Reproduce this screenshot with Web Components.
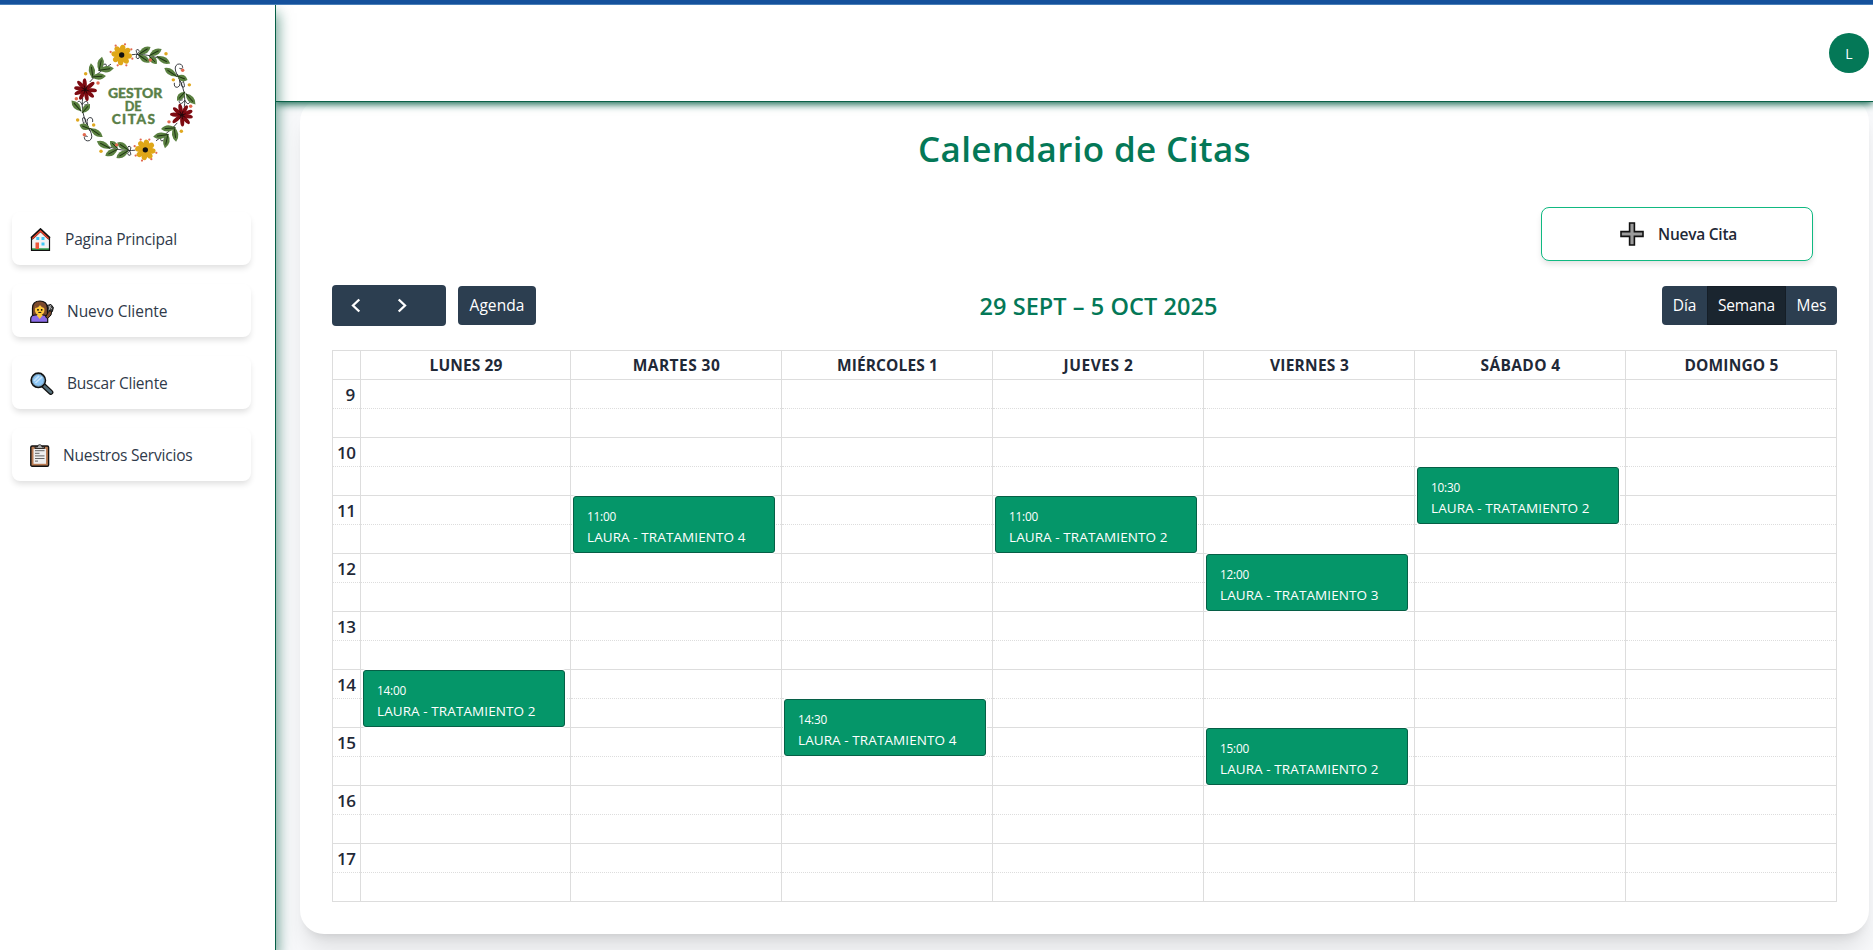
<!DOCTYPE html>
<html lang="es">
<head>
<meta charset="utf-8">
<title>Gestor de Citas</title>
<style>
html,body{margin:0;height:100%;overflow:hidden}
body{font-family:"Open Sans","Noto Sans",sans-serif;color:#1f2937;background:#fff}
</style>
</head>
<body>
<citas-app></citas-app>
<script>
const define = (name, html, init) => customElements.define(name, class extends HTMLElement {
  connectedCallback() {
    if (this.shadowRoot) return;
    const root = this.attachShadow({ mode: 'open' });
    root.innerHTML = typeof html === 'function' ? html(this) : html;
    if (init) init(this, root);
  }
});

/* Text that spreads or tightens its letters to fill a given width. */
define('fit-text', '<style>:host{display:inline-block;white-space:nowrap;line-height:1}span{display:inline-block}</style><span><slot></slot></span>', (el, root) => {
  const span = root.querySelector('span');
  const w = parseFloat(el.getAttribute('w'));
  const n = el.textContent.length;
  const space = (w - span.getBoundingClientRect().width) / n;
  span.style.letterSpacing = space.toFixed(3) + 'px';
});

/* ---------- icons ---------- */
const ICONS = {
  home: [21, 23, `<path d="M2.5 10.5V21h16V10.5L10.5 3z" fill="#f2f2f2"/><path d="M1 21.2h19" stroke="#3aa655" stroke-width="2"/><path d="M5.5 14.5H9V21H5.5z" fill="#f0583a"/><path d="M6.3 9h3v3h-3zm5.200 0h3v3h-3zm0 5.500h3v3h-3z" fill="#40c8f4"/><path d="M1.500 10.500 10.500 2l9 8.500" fill="none" stroke="#111" stroke-width="3.200"/><path d="M2.200 10.700 10.500 3l8.300 7.700" fill="none" stroke="#f0452c" stroke-width="1.500"/><path d="M1.500 10V22.300h18V10" fill="none" stroke="#111" stroke-width="1.200"/>`],
  woman: [24, 23, `<path d="M2.500 18V8C2.500 3 6 1 10 1s7.500 2.500 7.500 7v9z" fill="#7c4a2d" stroke="#111" stroke-width="1.200"/><path d="M.7 22.300V19c0-2.500 2-4 5-4h7c3 0 5 1.500 5 4v3.300z" fill="#8b6be8" stroke="#111" stroke-width="1.200"/><path d="m15.500 17 3.500-6 3-1-1 5-3.300 3.500z" fill="#7c4a2d" stroke="#111"/><path d="m17 5.500 4-1 2.400 3-1 4-3.800-1z" fill="#444" stroke="#111"/><path d="m18.500 6 3.500 3m-1.500-4-1.500 5" stroke="#ccc" stroke-width=".8"/><ellipse cx="9.700" cy="10" rx="4.800" ry="5.200" fill="#ffc83d"/><path d="M5 8c2 0 4-1 5-3 1 2 3 3 5 3-1-3-2.500-4-5-4s-4 1-5 4z" fill="#7c4a2d"/><path d="m6.500 15 3.200 4 3.200-4z" fill="#ffc83d"/><circle cx="8" cy="9.800" r=".9"/><circle cx="11.700" cy="9.800" r=".9"/><path d="M8.300 12.400h3" stroke="#111"/>`],
  search: [24, 23, `<path d="m13 13 7.800 7.300" stroke="#111" stroke-width="5.200" stroke-linecap="round"/><path d="m14 14 6.800 6.300" stroke="#546e7a" stroke-width="2.800" stroke-linecap="round"/><circle cx="8.300" cy="8.300" r="7.100" fill="#8cc5f5" stroke="#111" stroke-width="1.700"/><circle cx="8.300" cy="8.300" r="5.900" fill="none" stroke="#6b8a9c" stroke-width=".8"/><path d="m4 9 5-5m-3.500 7L12 5" stroke="#c7e5fb" stroke-width="1.700"/>`],
  clip: [20, 23, `<rect x=".8" y="2" width="17.800" height="20.200" rx="1.300" fill="#b97b52" stroke="#111" stroke-width="1.400"/><path d="M3.500 4.800h12.500v15H3.500z" fill="#eee"/><path d="M5 4.500V3h2.500C7.500 1.500 8.500.7 9.700.7S12 1.500 12 3h2.500v1.500z" fill="#aaa" stroke="#111" stroke-width=".8"/><path d="M5 6.700h9.500M5 9.300h4.500M5 11.900h9.500M5 14.500h9.500M5 17.100h3" stroke="#555" stroke-width=".9"/>`],
  plus: [24, 24, `<path d="M9.600 1h4.800v8.600H23v4.800h-8.600V23H9.600v-8.600H1V9.600h8.600z" fill="#9b9b9b" stroke="#111" stroke-width="1.600"/>`],
  left: [10, 15, `<path d="M8.300 1.500 2 7.500l6.300 6" fill="none" stroke="#fff" stroke-width="2.300"/>`],
  right: [10, 15, `<path d="M1.700 1.500 8 7.500l-6.300 6" fill="none" stroke="#fff" stroke-width="2.300"/>`]
};
define('app-icon', el => {
  const [w, h, body] = ICONS[el.getAttribute('name')];
  return `<style>:host{display:block;flex:none;line-height:0}</style><svg width="${w}" height="${h}" viewBox="0 0 ${w} ${h}">${body}</svg>`;
});

/* ---------- wreath logo ---------- */
define('wreath-logo', () => {
  const leaf = (x, y, a, l = 34) => `<g transform="translate(${x} ${y}) rotate(${a})"><path d="M0 0Q${l * .55} -19 ${l} 0Q${l * .55} 19 0 0Z" fill="#5a8040"/><path d="M0 0H${l * .75}" stroke="#1d3212" stroke-width="2.800"/></g>`;
  const dot = (x, y, c, r = 5.200) => `<circle cx="${x}" cy="${y}" r="${r}" fill="${c}"/>`;
  const O = '#e2694f', Y = '#e0a820';
  const yellow = `<g>${[0,45,90,135,180,225,270,315].map(a => `<ellipse cx="19" cy="0" rx="12" ry="8.500" fill="#dfa718" transform="rotate(${a + 8})"/>`).join('')}<circle r="15" fill="#dfa718"/><circle r="8" fill="#111"/>${[[-18,-28],[10,-32],[29,-17],[32,11],[14,31],[-12,31],[-33,-9]].map(p => dot(p[0], p[1], O, 3.400)).join('')}</g>`;
  const red = `<g>${[5,42,80,120,157,190,228,265,320].map((a, i) => `<ellipse cx="19" cy="0" rx="${i % 2 ? 15 : 16}" ry="6" fill="#7d0b12" transform="rotate(${a})"/>`).join('')}${[20,65,110,160,210,255,300].map(a => `<path d="M0 0H13" stroke="#1a0506" stroke-width="2.200" transform="rotate(${a})"/>`).join('')}<circle r="5" fill="#24070a"/></g>`;
  const half = `
  <g fill="none" stroke="#20242a" stroke-width="2.600" stroke-linecap="round">
   <path d="M216 59C245 55 280 62 318 78M90 140C106 120 128 104 152 88M68 190C64 215 68 250 90 286"/>
   <path d="M232 57q-8-15 2-13 9 4-2 13-8 12 2 14 9-3-1-14M128 104q-3-18 9-17 7 9-7 14m3 4q14 8 19-2-3-10-14-2"/>
   <path d="M66 208q-8-16-14-6m15 6q10-14 16-6 3 8-9 8M72 268q-9-22 0-20 9 4 3 14M88 286q-14-34 0-38 12-2 10 12M90 286q12 24-2 31-14 3-15-10 3-8 9-3"/>
  </g>
  ${leaf(236,58,-32,42)}${leaf(236,60,34,40)}${leaf(268,62,-28,42)}${leaf(268,64,44,32)}${leaf(290,64,28,46)}
  ${leaf(99,130,-98,46)}${leaf(117,108,-78,44)}${leaf(116,106,-8,46)}${leaf(94,126,-4,44)}
  ${leaf(64,229,-132,44)}${leaf(66,234,-48,36)}${leaf(90,282,-158,34)}${leaf(90,280,34,46)}
  ${dot(271,75,O)}${dot(318,56,Y)}${dot(77,116,Y)}${dot(114,144,O)}${dot(49,191,O)}${dot(53,255,Y)}${dot(101,270,Y)}${dot(73,299,O)}
  <g transform="translate(185 60)">${yellow}</g><g transform="translate(76 164)">${red}</g>`;
  return `<style>:host{display:block;width:150px;height:135px}text{font-family:Lato,"Open Sans",sans-serif;font-weight:900;fill:#5a7f48;stroke:#5a7f48;stroke-width:1;stroke-linejoin:round}</style>
  <svg width="150" height="135" viewBox="0 0 450 405">${half}<g transform="rotate(180 220.500 202.300)">${half}</g>
  <text x="144" y="189.500" font-size="41" textLength="163" lengthAdjust="spacingAndGlyphs">GESTOR</text>
  <text x="194" y="228" font-size="41" textLength="51" lengthAdjust="spacingAndGlyphs">DE</text>
  <text x="155" y="266" font-size="41" textLength="130">CITAS</text></svg>`;
});

/* ---------- sidebar ---------- */
define('nav-item', el => `<style>
:host{display:flex;align-items:center;box-sizing:border-box;height:53px;padding:2px 0 0 18px;border-radius:8px;background:#fff;box-shadow:0 4px 6px -1px rgba(0,0,0,.13);font-size:15.500px;color:#2f3a4a}
.t{margin:-2px 0 0 ${el.getAttribute('gap')}px}</style>
<app-icon name="${el.getAttribute('icon')}"></app-icon><div class="t"><fit-text w="${el.getAttribute('w')}">${el.getAttribute('label')}</fit-text></div>`);

define('side-bar', `<style>
:host{display:block;box-sizing:border-box;width:276px;background:#fff;border-right:1px solid #065f46;box-shadow:2px 8px 13px rgba(6,95,70,.6);padding:30px 24px 0 12px;position:relative;z-index:3}
wreath-logo{margin-left:48px}
nav{display:flex;flex-direction:column;gap:19px;margin-top:42px}</style>
<wreath-logo></wreath-logo>
<nav>
<nav-item icon="home" gap="14" w="112" label="Pagina Principal"></nav-item>
<nav-item icon="woman" gap="13" w="100.500" label="Nuevo Cliente"></nav-item>
<nav-item icon="search" gap="13" w="100.500" label="Buscar Cliente"></nav-item>
<nav-item icon="clip" gap="13" w="129.500" label="Nuestros Servicios"></nav-item>
</nav>`);

/* ---------- header ---------- */
define('top-header', `<style>
:host{display:flex;justify-content:flex-end;align-items:center;box-sizing:border-box;height:97px;background:#fff;border-bottom:1px solid #0b6148;box-shadow:0 2px 8px #065f46;padding-right:4px;position:relative;z-index:2}
.avatar{width:40px;height:40px;border-radius:50%;background:#047857;color:#fff;font-size:14px;display:flex;align-items:center;justify-content:center;padding-top:1px;box-sizing:border-box}</style>
<div class="avatar">L</div>`);

/* ---------- calendar ---------- */
define('new-button', `<style>
:host{display:flex;align-items:center;justify-content:flex-start;box-sizing:border-box;width:272px;height:54px;border:1px solid #10b981;border-radius:8px;background:#fff;box-shadow:0 4px 6px -1px rgba(0,0,0,.12);padding-left:78px;gap:14px;font-size:15.500px;font-weight:600}
fit-text{margin-top:2px}</style>
<app-icon name="plus"></app-icon><fit-text w="79">Nueva Cita</fit-text>`);

define('cal-toolbar', `<style>
:host{display:grid;grid-template-columns:1fr auto 1fr;align-items:center;height:41px;font-size:15.500px;color:#fff}
.l,.r,.nav,.b{display:flex;align-items:center}
.l{gap:12px}.r{justify-content:flex-end}
.nav{box-sizing:border-box;width:114px;height:41px;border-radius:4px;background:#2c3e50;padding-left:19px;gap:36px}
.b{box-sizing:border-box;height:39px;background:#2c3e50;justify-content:center}
.ag{width:78px;border-radius:4px}
.d{width:45px;border-radius:4px 0 0 4px}.s{width:79px;background:#1a252f;border:1px solid #151e27}.m{width:51px;border-radius:0 4px 4px 0}
h2{margin:0;font-size:23.500px;font-weight:560;line-height:1;color:#047857;padding:2px 0 0 28px}</style>
<div class="l"><div class="nav"><app-icon name="left"></app-icon><app-icon name="right"></app-icon></div><div class="b ag"><fit-text w="55">Agenda</fit-text></div></div>
<h2><fit-text w="238">29 SEPT – 5 OCT 2025</fit-text></h2>
<div class="r"><div class="b d"><fit-text w="23.500">Día</fit-text></div><div class="b s"><fit-text w="57">Semana</fit-text></div><div class="b m"><fit-text w="30">Mes</fit-text></div></div>`);

define('cal-event', el => `<style>
:host{display:block;box-sizing:border-box;width:202px;height:57px;margin-left:2px;background:#059669;border:1px solid #065f46;border-radius:3px;box-shadow:0 0 0 1px #fff;color:#fff;padding:12px 0 0 13px;z-index:1}
.a{font-size:11.800px;height:14px;line-height:14px}.b{font-size:13.500px;height:18px;margin-top:5px;line-height:18px}</style>
<div class="a"><fit-text w="29">${el.getAttribute('time')}</fit-text></div><div class="b"><fit-text w="158.500">LAURA - TRATAMIENTO ${el.getAttribute('n')}</fit-text></div>`);

define('cal-day', el => `<style>
:host{display:block;border-right:1px solid #ddd}
.h{box-sizing:border-box;height:29px;border-bottom:1px solid #ddd;display:flex;align-items:center;justify-content:center;font-size:15.500px;font-weight:700;padding:2px 0 0 1px}
.g{display:grid;grid-template:repeat(18,29px)/minmax(0,1fr)}
.c{grid-column:1;border-bottom:1px dotted #ddd}.c.o{border-bottom-style:solid}
cal-event{grid-column:1}</style>
<div class="h"><fit-text w="${el.getAttribute('w')}">${el.getAttribute('label')}</fit-text></div>
<div class="g">${Array.from({ length: 18 }, (_, i) => `<div class="c${i % 2 ? ' o' : ''}" style="grid-row:${i + 1}"></div>`).join('')}${(el.getAttribute('events') || '').split(',').filter(Boolean).map(e => {
  const [time, n] = e.split('/'); const [h, m] = time.split(':').map(Number);
  return `<cal-event style="grid-row:${(h - 9) * 2 + (m ? 1 : 0) + 1}/span 2" time="${time}" n="${n}"></cal-event>`;
}).join('')}</div>`);

define('cal-axis', `<style>
:host{display:block;border-right:1px solid #ddd}
.h{box-sizing:border-box;height:29px;border-bottom:1px solid #ddd}
.c{box-sizing:border-box;height:29px;border-bottom:1px dotted #ddd;display:flex;align-items:center;justify-content:flex-end;padding:0 4.500px 0 0;font-size:17px;font-weight:560}
.c.o{border-bottom-style:solid}</style><div class="h"></div>${[9,10,11,12,13,14,15,16,17].map(h => `<div class="c"><fit-text w="${h > 9 ? 18.5 : 10}">${h}</fit-text></div><div class="c o"></div>`).join('')}`);

define('week-grid', `<style>
:host{display:grid;grid-template-columns:28px 210px repeat(6,211px);border:1px solid #ddd;border-width:1px 0 0 1px}</style>
<cal-axis></cal-axis>
<cal-day w="73" label="LUNES 29" events="14:00/2"></cal-day>
<cal-day w="87.500" label="MARTES 30" events="11:00/4"></cal-day>
<cal-day w="101" label="MIÉRCOLES 1" events="14:30/4"></cal-day>
<cal-day w="70" label="JUEVES 2" events="11:00/2"></cal-day>
<cal-day w="79" label="VIERNES 3" events="12:00/3,15:00/2"></cal-day>
<cal-day w="80" label="SÁBADO 4" events="10:30/2"></cal-day>
<cal-day w="94" label="DOMINGO 5"></cal-day>`);

define('calendar-card', `<style>
:host{display:flex;flex-direction:column;box-sizing:border-box;height:836px;margin:-4px 4px 0 24px;padding:33px 32px 0;background:#fff;border-radius:24px;box-shadow:0 20px 25px -5px rgba(0,0,0,.1),0 8px 10px -6px rgba(0,0,0,.1)}
h1{margin:0;text-align:center;font-size:35px;line-height:35px;font-weight:560;color:#047857}
new-button{align-self:flex-end;margin:41px 24px 24px 0}
week-grid{margin-top:24px}</style>
<h1><fit-text w="333">Calendario de Citas</fit-text></h1>
<new-button></new-button>
<cal-toolbar></cal-toolbar>
<week-grid></week-grid>`);

define('citas-app', `<style>
:host{display:flex;flex-direction:column;height:950px;overflow:hidden}
.bar{flex:none;height:5px;box-sizing:border-box;background:#15519c;border-bottom:1px solid #4a7fb8;position:relative;z-index:5}
.row{display:flex;flex:1;min-height:0}
side-bar{flex:none}
main{flex:1;min-width:0;background:#f8f9fb}</style>
<div class="bar"></div>
<div class="row"><side-bar></side-bar><main><top-header></top-header><calendar-card></calendar-card></main></div>`);
</script>
</body>
</html>
